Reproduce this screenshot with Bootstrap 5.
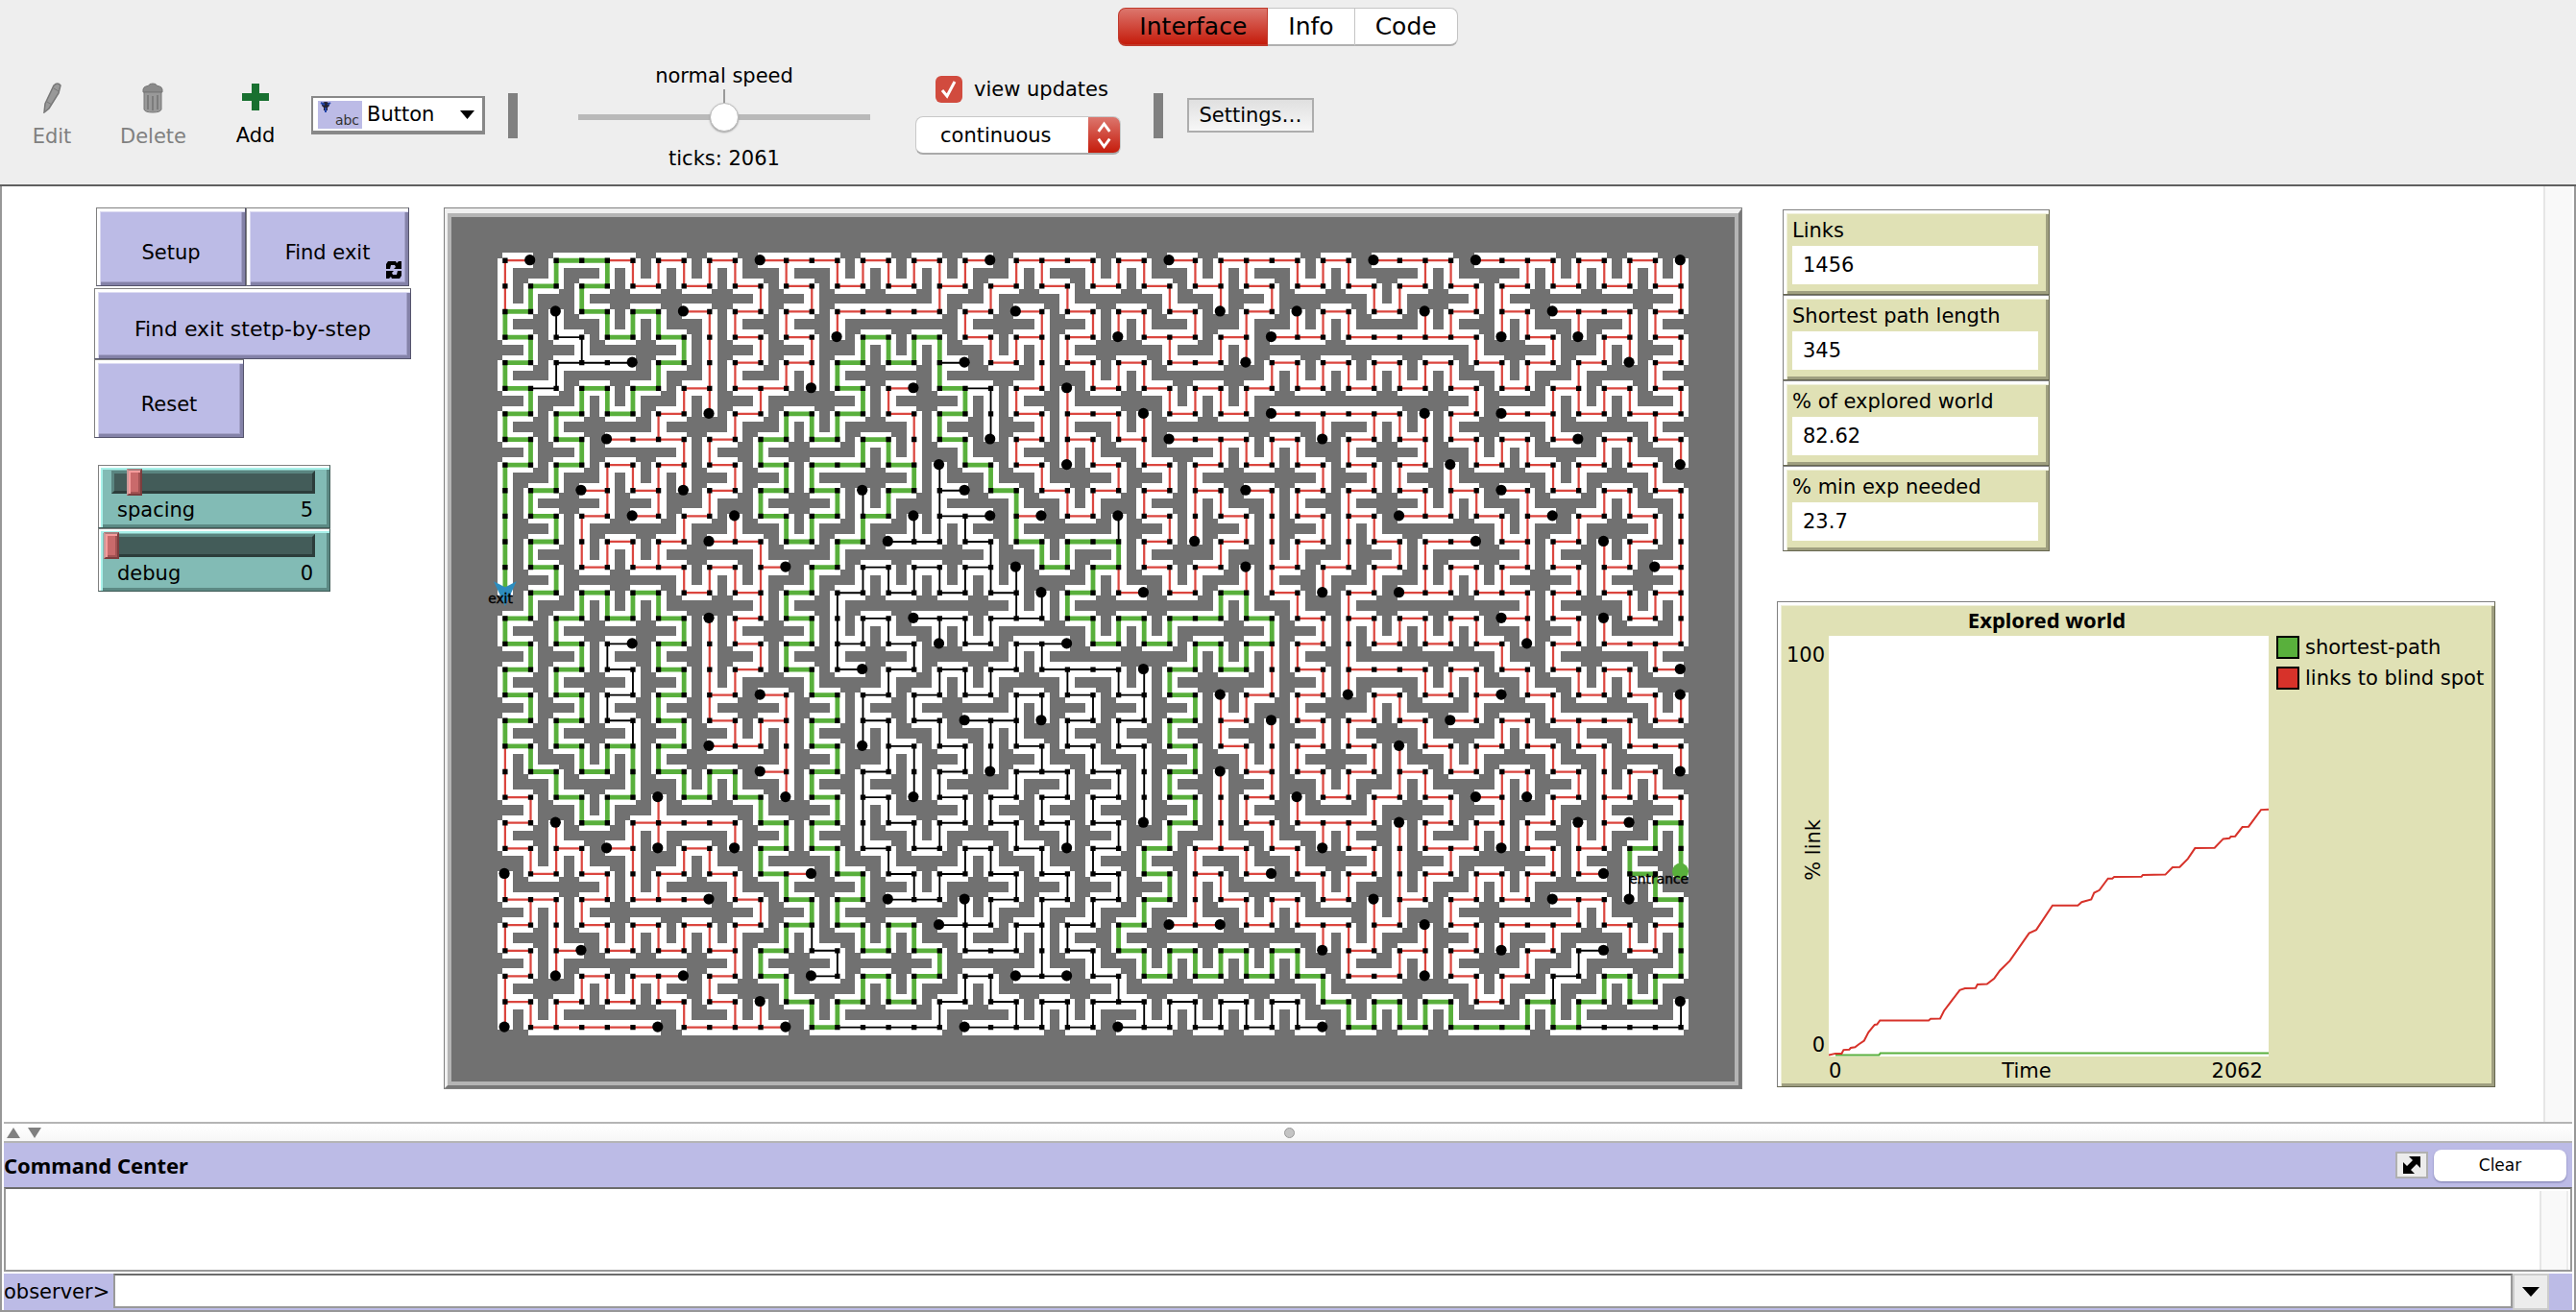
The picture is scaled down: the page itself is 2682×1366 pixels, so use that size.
<!DOCTYPE html>
<html lang="en">
<head>
<meta charset="utf-8">
<meta name="viewport" content="width=device-width, initial-scale=1">
<title>NetLogo - Maze</title>
<link href="https://cdn.jsdelivr.net/npm/bootstrap@5.3.0/dist/css/bootstrap.min.css" rel="stylesheet">
<style>
  :root { --lav: #bcbbe6; --khaki: #e0e1b5; --teal: #82bbb5; --bar: #eeeeee; }
  body { font-family: "DejaVu Sans", "Noto Sans", sans-serif; font-size: 21px; line-height: 24px; color: #000; background: #fff; }
  .window-frame { min-height: 100vh; }
  .bold-face { font-family: "Noto Sans", "Open Sans", sans-serif; font-size: 22px; font-weight: 700; }
  button, input, select { font-family: inherit; color: #000; }

  /* top bars */
  .app-head { background: var(--bar); border-bottom: 2px solid #606060; padding-top: 8px; }
  .view-tabs .btn { --bs-btn-border-radius: 8px; height: 40px; padding: 0 21px; font-size: 25px; line-height: 34px; color: #000; background: #fff; border: 1px solid #c4c4c4; border-bottom: 2px solid #b0b0b0; }
  .view-tabs .btn.active { background: linear-gradient(#dc766d, #c51b0b); border-color: #c0392b; color: #000; }
  .tool-row { height: 144px; padding-left: 30px; }
  .tool-btn { width: 48px; padding: 0; border: 0; background: none; color: #000; }
  .tool-btn:disabled { color: #808080; }
  .tool-btn svg { display: block; margin: 0 auto 12px; }
  .tool-btn.del-btn { width: 68px; margin-left: 47px; }
  .tool-btn.add-btn { margin-left: 49px; }
  .tool-btn.add-btn svg { margin-bottom: 14px; }
  .widget-pick { width: 181px; height: 40px; margin-left: 34px; padding: 0 8px 0 5px; gap: 5px; background: #fff; border: 2px solid #888; border-width: 2px 3px 4px 2px; }
  .widget-pick .pick-icon { width: 46px; height: 29px; background: var(--lav); font: 14px/14px "DejaVu Sans", sans-serif; padding: 13px 0 0 15px; position: relative; color: #333; }
  .widget-pick .pick-icon svg { position: absolute; left: 2px; top: 0; }
  .v-sep { width: 10px; height: 47px; background: #808080; }
  .v-sep.far-sep { margin-left: 34px; }
  .speed-box { width: 304px; margin-left: 63px; padding-top: 3px; }
  .speed-range { appearance: none; display: block; width: 100%; height: 30px; margin: 16px 0; background: linear-gradient(#b9b9b9, #b9b9b9) center/100% 6px no-repeat; position: relative; }
  .speed-range::-webkit-slider-thumb { appearance: none; width: 30px; height: 30px; border-radius: 50%; background: #fff; border: 1px solid #bbb; box-shadow: 0 1px 2px #999; }
  .speed-hold { position: relative; }
  .speed-tick { position: absolute; left: 50%; bottom: 100%; width: 2px; height: 14px; background: #999; margin-left: -1px; }
  .update-box { width: 214px; margin-left: 47px; }
  .check-line { padding-left: 21px; }
  .update-check { appearance: none; width: 28px; height: 28px; border-radius: 6px; margin: 0 12px 0 0; border: 0;
    background: #d14b3e url("data:image/svg+xml,%3Csvg xmlns='http://www.w3.org/2000/svg' viewBox='0 0 28 28'%3E%3Cpath d='M7 15l5 6L20 6' fill='none' stroke='white' stroke-width='3'/%3E%3C/svg%3E"); }
  .update-pick { appearance: none; width: 214px; height: 40px; margin-top: 14px; padding: 0 0 0 25px; border: 1px solid #c8c8c8; border-bottom: 2px solid #aaa; border-radius: 8px;
    background: url("data:image/svg+xml,%3Csvg xmlns='http://www.w3.org/2000/svg' viewBox='0 0 34 40'%3E%3Cpath d='M11 16l6-8 6 8M11 24l6 8 6-8' fill='none' stroke='white' stroke-width='3'/%3E%3C/svg%3E") right/33px 40px no-repeat, linear-gradient(#dc766d, #c51b0b) right/33px 100% no-repeat, #fff; }
  .settings-btn { width: 132px; height: 36px; margin-left: 25px; padding: 0; border: 2px solid #adadad; background: linear-gradient(#e0e0e0, #f7f7f7); }

  /* interface area */
  .stage { border-left: 2px solid #979797; border-right: 2px solid #979797; padding-left: 2px; padding-right: 2px; }
  .stage-body { padding: 22px 50px 20px 94px; }
  .scroll-gutter { width: 30px; background: #f9f9f9; border-left: 2px solid #e6e6e6; }
  .left-col { width: 330px; flex: none; margin-right: 34px; }
  .right-col { flex: 0 1 748px; margin-left: 36px; min-width: 660px; padding-top: 2px; }
  .top-pair { margin-left: 2px; }
  .nl-btn { display: block; position: relative; width: 156px; height: 82px; padding: 11px 0 0; background: var(--lav); border: 1px solid; border-color: #808080 #55546c #55546c #808080; box-shadow: inset 3px 3px 0 #fff, inset 4px 4px 0 #dcdbf2, inset -3px -3px 0 #8482a8, inset -4px -4px 0 #a3a1c8; }
  .nl-btn.find-btn { width: 170px; }
  .nl-btn.step-btn { width: 100%; height: 74px; margin-top: 2px; font-size: 22px; }
  .nl-btn svg { position: absolute; right: 7px; bottom: 7px; }
  .slider-stack { margin: 28px 0 0 4px; }
  .nl-slider { width: 242px; height: 66px; padding: 5px 15px 0 13px; background: var(--teal); border: 1px solid; border-color: #808080 #3d5a56 #3d5a56 #808080; box-shadow: inset 2px 2px 0 #fff, inset 4px 4px 0 #a9f1ea, inset -3px -3px 0 #5c8984; }
  .groove { height: 24px; background: #435c59; border: 3px solid; border-color: #5a8580 #2c3d3b #2c3d3b #5a8580; margin-bottom: 5px; }
  .groove input { appearance: none; display: block; width: calc(100% + 22px); height: 28px; margin: -5px -11px; background: none; }
  .groove input::-webkit-slider-thumb { appearance: none; width: 16px; height: 28px; background: #c96a6b; border: 2px solid; border-color: #a87c7c #7c3d3e #7c3d3e #c99; box-shadow: inset 2px 2px 0 #f59c9c, inset -2px -2px 0 #a35253; }
  .slider-text { padding: 0 2px 0 6px; }

  .world-view { flex: 0 1 1352px; min-width: 0; align-self: flex-start; border: 4px solid; border-width: 6px 4px 4px 4px; border-color: #f0f0f0 #777 #777 #f0f0f0; outline: 1px solid #808080; outline-offset: -1px; }
  .world-view svg { display: block; width: 100%; height: auto; background: #717171; border: 4px solid #b4b4b4; }

  .bevel-khaki { background: var(--khaki); border: 1px solid; border-color: #808080 #66664f #66664f #808080; box-shadow: inset 3px 3px 0 #fff, inset 4px 4px 0 #eff0da, inset -3px -3px 0 #9f9f80; }
  .monitor { width: 278px; height: 89px; margin-left: 6px; padding: 9px 11px 0 9px; }
  .monitor output { display: block; height: 40px; line-height: 40px; margin-top: 4px; padding-left: 11px; background: #fff; }
  .plot { margin-top: 52px; padding: 4px 0 4px; }
  .plot-title { width: 560px; line-height: 28px; padding-bottom: 3px; }
  .y-axis { width: 53px; flex: none; padding: 8px 4px 0 0; }
  .y-axis .turned { writing-mode: vertical-rl; transform: rotate(180deg); }
  .plot-area { width: 458px; height: 438px; background: #fff; display: block; flex: none; }
  .x-axis { width: 458px; margin: 3px 0 0 53px; padding-right: 6px; }
  .key-item { gap: 6px; height: 32px; padding-left: 8px; white-space: nowrap; }
  .key-item i { width: 24px; height: 24px; border: 2px solid #000; }
  .key-green { background: #59b03c; }
  .key-red { background: #d7322a; }

  /* command centre */
  .splitter { height: 22px; border-top: 2px solid #b4b4b4; border-bottom: 2px solid #b4b4b4; background: linear-gradient(#fff, #f7f7f7); padding-left: 3px; }
  .splitter .knob { width: 11px; height: 11px; border-radius: 50%; background: #c4c4c4; border: 1px solid #999; }
  .splitter .side { flex: 1 1 0; }
  .cc-head { height: 46px; background: var(--lav); padding-right: 6px; }
  .pop-btn { width: 34px; height: 28px; padding: 0; border: 2px solid #b0b0b0; background: #ececec; margin-right: 6px; }
  .clear-btn { width: 138px; height: 33px; padding: 0; font-size: 17px; border: 0; border-radius: 8px; background: #fff; box-shadow: 0 1px 2px #77a; }
  .cc-log { height: 88px; border: 2px solid #999; border-top-color: #6b6b6b; margin-bottom: 2px; padding: 2px 2px 0 0; }
  .cc-log .scroll-gutter { border-right: 2px solid #ececec; }
  .cc-line { height: 38px; background: var(--lav); }
  .cc-line label { width: 114px; padding-top: 7px; }
  .cc-line .cmd-input { min-width: 0; height: 36px; border: 2px solid #999; border-top-color: #6b6b6b; border-radius: 0; padding: 0 6px; background: #fff; }
  .hist-btn { width: 38px; height: 38px; padding: 0; border: 2px solid #ccc; background: #ececec; margin-right: 24px; }
  .stage.last-part { border-bottom: 2px solid #979797; }
</style>
<script src="https://cdn.jsdelivr.net/npm/bootstrap@5.3.0/dist/js/bootstrap.bundle.min.js"></script>
</head>
<body>
<div class="window-frame d-flex flex-column">

  <header class="app-head">
    <div class="d-flex justify-content-center">
      <div class="btn-group view-tabs" role="group" aria-label="Tabs">
        <button type="button" class="btn active">Interface</button>
        <button type="button" class="btn">Info</button>
        <button type="button" class="btn">Code</button>
      </div>
    </div>
    <div class="tool-row d-flex align-items-center">
      <button class="tool-btn" type="button" disabled>
        <svg width="20" height="32" viewBox="0 0 20 32"><path d="M12 3q4-4 7 0l-2 8-10 16-5 4 1-9z" fill="#999" stroke="#777" stroke-width="1.5"/><path d="M12 6l5 3M5 20l5 3" stroke="#777"/></svg>
        Edit</button>
      <button class="tool-btn del-btn" type="button" disabled>
        <svg width="22" height="32" viewBox="0 0 22 32"><path d="M1 7q0-3 6-4 0-2 4-2t4 2q6 1 6 4v3H1z" fill="#8a8a8a" stroke="#777"/><path d="M2 10h18v18q-1 3-9 3t-9-3z" fill="#999" stroke="#777"/><path d="M6 13v15M11 14v15M16 13v15" stroke="#7c7c7c" stroke-width="2"/></svg>
        Delete</button>
      <button class="tool-btn add-btn" type="button">
        <svg width="28" height="28" viewBox="0 0 28 28"><path d="M10 0h8v10h10v8H18v10h-8V18H0v-8h10z" fill="#187030"/></svg>
        Add</button>
      <button class="widget-pick d-flex align-items-center" type="button">
        <span class="pick-icon"><svg width="12" height="14" viewBox="0 0 12 14"><path d="M2 5a4 4 0 0 1 8 0l-2 2v3H4V7z" fill="#223"/><path d="M1 2l4 2M11 2L8 4M6 7v5" stroke="#24a" stroke-width="2"/></svg>abc</span>
        <span>Button</span>
        <svg class="ms-auto" width="15" height="9" viewBox="0 0 15 9"><path d="M0 0h15L7.500 9z"/></svg>
      </button>
      <div class="v-sep ms-4"></div>
      <div class="speed-box text-center">
        <label for="speed">normal speed</label>
        <div class="speed-hold"><i class="speed-tick"></i><input id="speed" class="speed-range" type="range" min="0" max="100" value="50"></div>
        <div>ticks: 2061</div>
      </div>
      <div class="update-box">
        <div class="check-line d-flex align-items-center"><input class="update-check" type="checkbox" id="updates" checked><label for="updates" class="text-nowrap">view updates</label></div>
        <select class="update-pick" aria-label="Update mode"><option>continuous</option><option>on ticks</option></select>
      </div>
      <div class="v-sep far-sep"></div>
      <button class="settings-btn" type="button">Settings…</button>
    </div>
  </header>

  <main class="stage d-flex flex-grow-1">
    <div class="stage-body d-flex flex-grow-1 align-items-start">
      <section class="left-col">
        <div class="top-pair d-flex">
          <button class="nl-btn" type="button">Setup</button>
          <button class="nl-btn find-btn" type="button">Find exit
            <svg width="16" height="18" viewBox="0 0 16 18"><path d="M0 8V3l2-3h8l1 2 2-2h3v8H8l2-2-1-2H5L4 8zM16 10v5l-2 3H6l-1-2-2 2H0v-8h8l-2 2 1 2h4l1-4z"/></svg>
          </button>
        </div>
        <button class="nl-btn step-btn" type="button">Find exit stetp-by-step</button>
        <button class="nl-btn" type="button">Reset</button>
        <div class="slider-stack">
          <div class="nl-slider">
            <div class="groove"><input type="range" id="spacing" min="0" max="44" value="5"></div>
            <div class="slider-text d-flex justify-content-between"><label for="spacing">spacing</label><span>5</span></div>
          </div>
          <div class="nl-slider">
            <div class="groove"><input type="range" id="debug" min="0" max="1" value="0"></div>
            <div class="slider-text d-flex justify-content-between"><label for="debug">debug</label><span>0</span></div>
          </div>
        </div>
      </section>

      <section class="world-view"><svg id="world" viewBox="0 0 251 169" role="img" aria-label="Maze"></svg></section>

      <section class="right-col">
        <div class="monitor bevel-khaki"><div>Links</div><output>1456</output></div>
        <div class="monitor bevel-khaki"><div>Shortest path length</div><output>345</output></div>
        <div class="monitor bevel-khaki"><div>% of explored world</div><output>82.62</output></div>
        <div class="monitor bevel-khaki"><div>% min exp needed</div><output>23.7</output></div>

        <div class="plot bevel-khaki">
          <div class="plot-title bold-face text-center">Explored world</div>
          <div class="d-flex">
            <div class="y-axis d-flex flex-column justify-content-between align-items-end"><span>100</span><span class="turned">% link</span><span>0</span></div>
            <svg class="plot-area" viewBox="129 151 920 1272" preserveAspectRatio="none" fill="none" stroke-width="2">
              <path vector-effect="non-scaling-stroke" stroke="#59b03c" d="M143 1419H234L237 1413H1049"/>
              <path vector-effect="non-scaling-stroke" stroke="#d7322a" d="M129 1419L143 1414 156 1414 160 1403 172 1402 175 1397 184 1395 192 1386 203 1375 212 1350 225 1327 230 1326 236 1314 338 1314 342 1309 362 1308 370 1285 403 1222 414 1217 436 1216 440 1205 460 1204 475 1187 487 1163 508 1133 548 1050 563 1040 597 966 650 966 658 956 678 948 684 928 695 920 713 885 722 885 726 880 783 879 786 874 833 873 848 851 863 850 880 825 895 793 936 792 954 765 967 763 970 758 979 757 994 729 1007 728 1033 677 1049 676"/>
            </svg>
            <div>
              <div class="key-item d-flex align-items-start"><i class="key-green"></i><span>shortest-path</span></div>
              <div class="key-item d-flex align-items-start"><i class="key-red"></i><span>links to blind spot</span></div>
            </div>
          </div>
          <div class="x-axis d-flex justify-content-between"><span>0</span><span>Time</span><span>2062</span></div>
        </div>
      </section>
    </div>
    <div class="scroll-gutter"></div>
  </main>

  <footer class="stage last-part">
    <div class="splitter d-flex align-items-center">
      <div class="side d-flex"><svg width="38" height="11" viewBox="0 0 38 11" fill="#808080"><path d="M0 11h14L7 0zM22 0h14l-7 11z"/></svg></div>
      <span class="knob"></span><div class="side"></div>
    </div>
    <div class="cc-head d-flex align-items-center">
      <span class="bold-face me-auto">Command Center</span>
      <button class="pop-btn" type="button" aria-label="Toggle orientation"><svg class="d-block mx-auto" width="18" height="18" viewBox="0 0 18 18"><path d="M6 0h12v12l-4-4-6 6 4 4H0V6l4 4 6-6z"/></svg></button>
      <button class="clear-btn" type="button">Clear</button>
    </div>
    <div class="cc-log d-flex justify-content-end"><div class="scroll-gutter"></div></div>
    <div class="cc-line d-flex">
      <label for="cmd">observer&gt;</label>
      <input class="cmd-input flex-grow-1" id="cmd" type="text">
      <button class="hist-btn" type="button" aria-label="History"><svg class="d-block mx-auto" width="18" height="10" viewBox="0 0 18 10"><path d="M0 0h18L9 10z"/></svg></button>
    </div>
  </footer>
</div>

<script>
// Links of the maze, row by row: across[r] joins column c to c+1, down[r] joins row r to r+1.
// r = leads to a blind spot, g = shortest path, k = not explored, . = wall
const across = `
r.ggr.r.r.rrr.r .r.r.rrr.r.r.rrr .r.rrr.rrr.r.r.
.g.g.r.r.r.r.r. r.r.r.r.r.r.r.r. r.r.r.r.r.r.r.r
g..g.g.r.r.r.rr rr.r.r.r.r.r..r. .r.r..r.r.rrr.r
g.k.g.g..r.r..g .g.r.r.r..rr.r.r r.rrrrr..r..r.r
g.kkk.g..r.r.g. g.k.r..r.r.rr..r .r.r.r.r.r.r..r
gk.g.g.r.rr..g. r.gk.r..r.r.r.r. r.r.r.r.r.r.r.r
g.g.g.r..r.g.g. r.g..r.rr..r.r.r rrrr..r.rr.r.rr
g.g.rrr.r.g.g.g ..g..r.r.r.rrr.r ..r.r.r.r.r.r.r
g.g.r.r.r.g.gg. g..g.r..r.r.r.r. r.r.r..r.r.r.r.
.g.r.r..r.g.g.. g.k.g.r.r.r.r.r. r.r.r.r.r.r.r.r
.g.r.r.r..g.g.g ..kk.r.r..r..r.. r.r.rr.r.r.r.r.
.g..r.r.rr.g.g. kk.k.g.gg.r..r.. r..r.rr.r.r..r.
.g.r.rr.r.r.g.k .k.k..g.g.r.r..r .r.r..r.r.r.r.r
.g.g.g.r.r.g.k. k.k.k..g.r.r.g.r ..r.rr.rr.r.r.r
g.g.g.g..r.g..k .kk.kk.g.g.gg.g. r.r.r.r.r.r..r.
g.g.k.g..r.g.k. k..k.kk.g.g.g.g. r..r.r.r..r.rrr
g.g.k.g..r.g.k. k.k.k.kkk..g.g.. r.rrr.r.r.r.r.r
g.g.k.g.r.r.g.k .k.k.k.k.k.g..r. r..r.r.r.r.r.r.
g.g.k.g.r.r.g.k .k.kk..k.k.g.r.. r.r.r.r.r.rrr.r
g.g.g.g.rr..g.. k.k..k.k.k.g.r.. r.r..r.r.r.r.rr
.g.g..g.g.r.g.k ..k..kk.k..g..r. r.r.r.r.r.r..r.
r.g.g..g.g..g.k ..k.k.k.k..g..r. .r.r.r.r..r.r.r
r..g.rrrr.g.g.. k.k.k.k.k..g..r. rrr..r.r.r..r.g
r.r.r..r..g.g.k .k.k.k..k.g.rr.r ..r..rr..r.r.g.
.r.r..r.r.gr.g. k.k.k.k.k.g.r.r. r.r..r.r.r.r.g.
rr.r.rrr.r.g.g. kk..k.k.k.g..r.r .r..r.r.r.rr..g
r..r.r.r.r.g.g. g.kk.k.k.g.rr.r. rr.r..r.rrr.r.r
r.r.r.r.r.g.k.g .g.kk..k.g.g.g.g ..r.r.r..r.k.r.
r..r.rr.r.g.k.g .g.k.kk.k.g.g.g. g.rr..r.r.k.g.g
r.r.r.r.r..g.g. g.k.k.k.kk.k.k.k .g.g.g.r.g.g.g.
.rrrrr.rrrr.gkk kk.kkk.k.kk.k.k. k.g.g.ggg.gkkkk`.trim().split('\n').map(s => s.replace(/ /g, ''));
const down = `
r.g.grrrrr.r.rr rrrr.rr.rrr.rrr. rrr..rr..rrrrrrr
rg.g......r.r.. ..r.r..r...r.r.r ...rr..rr......r
g.k.ggg.rr.r.r. ...r..r.rrr.r.r. rrr..rr.rr.r.rr.
.g.k...gr.r.r.g ggg.rrrr...r.rr. .......r..r.rr.r
g.k...g.rr.rrg. ..g...r.rrr....r rrrrrrr.rr.r..r.
.g.ggg.rr.r...g r..gkr.r...rrrr. .......r..rrrr.r
g.g...r..r.ggg. .rg.k.rr.rr..... .r.rrrr...r...r.
.g.g...rr.g...g gr.g.r.rr.r..rrr r.r..r.rrr..rr.r
g.g.rrrr.r.gg.. .gk.g.r..r.rr... .r.rr.r...rr..r.
gg..r.r.r.g..gk g.k..g.rr.r.rr.r r.r..rrr.r..rr.r
g.gr...r.r.gg.g .kkk.g...k.rr.rr .rrr....rr.r..rr
gg.rrrr...r..g. ....k.gg.gr..r.r r.r.rr...rr.rr.r
g.g....rrrr.g.k kkkkkk..gr.rr.rr .r.r.rrrr..rr..r
.g.gggg...rg.k. .....kkg.....gg. r.r......rr..rrr
g.g....grr..gkk k.kkk...gggg...g .rrrrrrr.r.rr..r
.g.gk.g.r.rg.k. .k...kk.....gggr r.r.....r.r...r.
g.g..k.grr..g.. k.kkk..k.kkg...r .rr..rrr.r.rrr..
.g.gk.g.r..r.gk .k...kk.k.k.grr. r..rr..r..r...rr
g.g..k.g.rrrg.k k.k.kk.k.k.g.r.r .rr..r..rr.r.r..
rg.gggg....r.g. kk.kk.k.k.k.g.rr r..rr.rr..r.r..r
r.g..g.ggg.rg.k .kk..k.k.kkg.r.r .rr.rr..rr.rrrr.
.r.gg.r...g..gk k..kk.k.k.k.grr. r..r..r.r.r.r..r
r.r..rr..r.gg.k .kk..k.k.k.g.r.r .rr.rr.rrr.rr.gg
.rrr.r.rr.g..g. k..kk.k.k.g.r.r. r..rr.r...rr.g.g
r...rrr..r.g..g .kk..k.k.k.grr.. .rr.rr.rrr...kg.
.rrr......r.gg. ...kk.k.k.g.r.rr r..rr.r....rr..g
r.r.rrrrrr.gk.g gg.k.kkk.g...... .rrr.r.rr.r..rrg
.rr......rg..k. ..g...k.k.gggggg g.r.rrr..r.k...g
r..rrrr.r..g..g gg.kk....k...... .g.....rr.k.ggg.
rrr....r.rr.gg. ..k..kkkk.kkkkkk k.ggggg..ggg...k`.trim().split('\n').map(s => s.replace(/ /g, ''));

const X = c => 10.5 + 5 * c, Y = r => 8.5 + 5 * r;
const lines = { r: '', g: '', k: '' };
const degree = {};
let floor = '', nodes = '', spots = '';
const touch = (c, r) => { degree[c + ',' + r] = (degree[c + ',' + r] || 0) + 1; };
across.forEach((row, r) => [...row].forEach((ch, c) => {
  if (ch === '.') return;
  floor += `M${X(c) - .5} ${Y(r) - 1.5}h6v3h-6z`;
  lines[ch] += `M${X(c)} ${Y(r)}h5`;
  touch(c, r); touch(c + 1, r);
}));
down.forEach((row, r) => [...row].forEach((ch, c) => {
  if (ch === '.') return;
  floor += `M${X(c) - 1.5} ${Y(r) - .5}h3v6h-3z`;
  lines[ch] += `M${X(c)} ${Y(r)}v5`;
  touch(c, r); touch(c, r + 1);
}));
for (let r = 0; r < 31; r++) for (let c = 0; c < 47; c++) {
  const marked = (c === 0 && r === 13) || (c === 46 && r === 24);
  if (marked) continue;
  if (degree[c + ',' + r] === 1) spots += `<circle cx="${X(c) - .15}" cy="${Y(r) - .1}" r="1.05"/>`;
  else nodes += `M${X(c) - .5} ${Y(r) - .5}h1v1h-1z`;
}
document.getElementById('world').innerHTML =
  `<path d="${floor}" fill="#fff" shape-rendering="crispEdges"/>
   <path d="${lines.k}" stroke="#000" stroke-width=".35"/>
   <path d="${lines.r}" stroke="#d7322a" stroke-opacity=".9" stroke-width=".42"/>
   <path d="${lines.g}" stroke="#59b03c" stroke-width=".9" stroke-linecap="square"/>
   <path d="${nodes}"/>${spots}
   <path d="M8.800 71.800l1.700 .9 1.700-.9-1.700 3.700z" fill="#2d8dbe" stroke="#2d8dbe" stroke-width=".5"/>
   <circle cx="240.400" cy="128" r="1.600" fill="#59b03c"/>
   <g font-size="2.600" font-family="DejaVu Sans, sans-serif" text-anchor="end" stroke="#000" stroke-width=".08"><text x="12" y="75.500">exit</text><text x="242" y="130.400">entrance</text></g>`;
</script>
</body>
</html>
